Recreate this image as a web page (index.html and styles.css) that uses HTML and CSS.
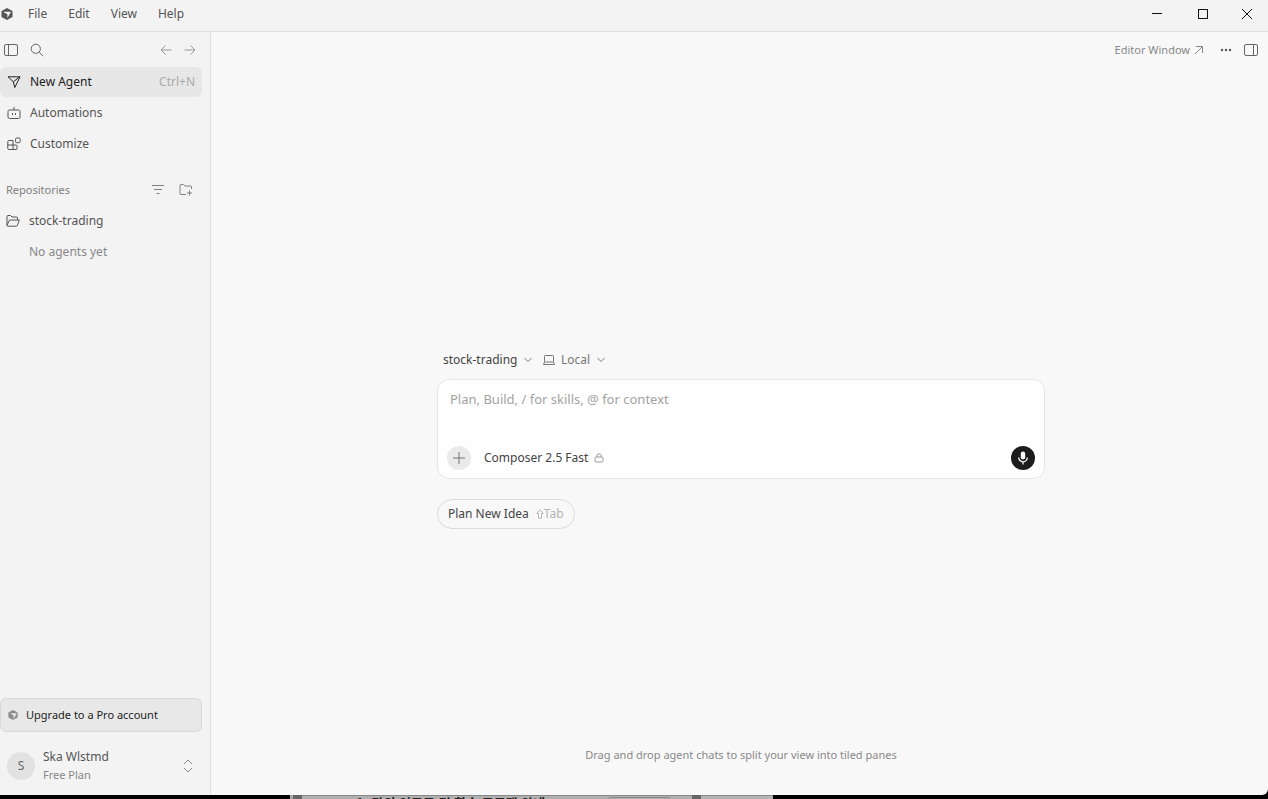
FILE: index.html
```html
<!DOCTYPE html>
<html lang="en">
<head>
<meta charset="utf-8">
<meta name="viewport" content="width=device-width, initial-scale=1">
<title>New Agent</title>
<link rel="stylesheet" href="styles.css">
</head>
<body>
<div class="window">
  <header class="titlebar">
    <svg class="logo" width="12" height="14" viewBox="0 0 12 14" aria-hidden="true"><path fill="#555" d="M6 1l5.500 3v6L6 13 .5 10V4z"/><path fill="#f3f3f3" d="M2 4.800h8L6.400 11V7.200z"/></svg>
    <nav class="menu" aria-label="Application menu">
      <button>File</button><button>Edit</button><button>View</button><button>Help</button>
    </nav>
    <div class="controls">
      <button aria-label="Minimize"><svg width="12" height="12" viewBox="0 0 12 12"><path d="M1 5.500h10"/></svg></button>
      <button aria-label="Maximize"><svg width="12" height="12" viewBox="0 0 12 12"><rect x="1.500" y="1.500" width="9" height="9" rx="1"/></svg></button>
      <button aria-label="Close"><svg width="12" height="12" viewBox="0 0 12 12"><path d="M1 1l10 10M11 1L1 11"/></svg></button>
    </div>
  </header>

  <div class="body">
    <aside class="sidebar">
      <div class="tools">
        <button aria-label="Toggle sidebar"><svg width="14" height="12" viewBox="0 0 14 12"><rect x=".5" y=".5" width="13" height="11" rx="1.500"/><path d="M4.500 1v10"/></svg></button>
        <button aria-label="Search"><svg width="14" height="14" viewBox="0 0 14 14"><circle cx="5.800" cy="5.800" r="4.600"/><path d="M9.200 9.200l4 4"/></svg></button>
        <button class="push faint" aria-label="Back"><svg width="12" height="12" viewBox="0 0 12 12"><path d="M11.500 6H1M5.500 1.500L1 6l4.500 4.500"/></svg></button>
        <button class="faint" aria-label="Forward"><svg width="12" height="12" viewBox="0 0 12 12"><path d="M.5 6H11M6.500 1.500L11 6l-4.500 4.500"/></svg></button>
      </div>

      <nav class="nav" aria-label="Agents">
        <button class="item active"><svg width="14" height="14" viewBox="0 0 14 14"><path d="M1 1.800h12L7.800 12.500 6.300 6.800zM6.300 6.800L12.500 2"/></svg>New Agent<kbd>Ctrl+N</kbd></button>
        <button class="item"><svg width="14" height="14" viewBox="0 0 14 14"><rect x="1" y="4" width="12" height="8.500" rx="1.500"/><path d="M7 4V1M5.500 7v2M8.500 7v2"/></svg>Automations</button>
        <button class="item"><svg width="14" height="14" viewBox="0 0 14 14"><path d="M1.800 3.500h4.200v9H1.800a1 1 0 0 1-1-1v-7a1 1 0 0 1 1-1zM.8 8H9a1 1 0 0 1 1 1v2.500a1 1 0 0 1-1 1H6"/><rect x="8.500" y="1" width="4.700" height="4.700" rx="1.300"/></svg>Customize</button>
      </nav>

      <section class="repos">
        <div class="repos-head">
          <h2>Repositories</h2>
          <button aria-label="Filter"><svg width="12" height="12" viewBox="0 0 12 12"><path d="M0 1.500h12M2 5.500h8M4.500 9.500h3"/></svg></button>
          <button aria-label="Add repository"><svg width="14" height="12" viewBox="0 0 14 12"><path d="M7 10.500H2a1 1 0 0 1-1-1v-8a1 1 0 0 1 1-1h2.500L6 2h5.500a1 1 0 0 1 1 1v2M10.500 6.500v5M8 9h5"/></svg></button>
        </div>
        <button class="repo"><svg width="14" height="12" viewBox="0 0 14 12"><path d="M1 10.500v-9a1 1 0 0 1 1-1h2.500L6 2h4.500a1 1 0 0 1 1 1v2M1 10.500L3.500 5H13.300l-2 5.500a1 1 0 0 1-1 .7H1.700a.7.700 0 0 1-.7-.7z"/></svg>stock-trading</button>
        <p class="empty">No agents yet</p>
      </section>

      <div class="account">
        <button class="upgrade"><svg width="10" height="12" viewBox="0 0 12 14"><path fill="#8b8b8b" d="M6 1l5.500 3v6L6 13 .5 10V4z"/><path fill="#e8e8e8" d="M2.500 5h8L6.500 12V7.200z"/></svg>Upgrade to a Pro account</button>
        <button class="profile">
          <span class="avatar">S</span>
          <span class="who"><span class="name">Ska Wlstmd</span><span class="plan">Free Plan</span></span>
          <svg width="10" height="14" viewBox="0 0 10 14"><path d="M1 5l4-4 4 4M1 9l4 4 4-4"/></svg>
        </button>
      </div>
    </aside>

    <main class="main">
      <div class="topbar">
        <a href="#editor">Editor Window<svg width="10" height="10" viewBox="0 0 10 10"><path d="M1 9l7.500-7.500M2 1.500h6.500V8"/></svg></a>
        <button aria-label="More"><svg width="12" height="4" viewBox="0 0 12 4"><g fill="#555" stroke="none"><circle cx="2" cy="2" r="1.200"/><circle cx="6" cy="2" r="1.200"/><circle cx="10" cy="2" r="1.200"/></g></svg></button>
        <button aria-label="Toggle panel"><svg width="14" height="12" viewBox="0 0 14 12"><rect x=".5" y=".5" width="13" height="11" rx="1.500"/><path d="M9.500 1v10"/></svg></button>
      </div>

      <div class="stage">
        <form class="chat">
          <div class="context">
            <label class="pick strong"><select aria-label="Repository"><option>stock-trading</option></select><svg width="8" height="6" viewBox="0 0 8 6"><path d="M.5 1L4 4.500 7.500 1"/></svg></label>
            <label class="pick"><svg width="12" height="12" viewBox="0 0 12 12"><rect x="1.500" y="1.500" width="9" height="6.500" rx=".8"/><path d="M1.500 8L.6 10.500h10.800L10.500 8"/></svg><select aria-label="Environment"><option>Local</option></select><svg width="8" height="6" viewBox="0 0 8 6"><path d="M.5 1L4 4.500 7.500 1"/></svg></label>
          </div>
          <div class="composer">
            <textarea rows="2" aria-label="Prompt" placeholder="Plan, Build, / for skills, @ for context"></textarea>
            <div class="actions">
              <button type="button" class="round" aria-label="Add context"><svg width="12" height="12" viewBox="0 0 12 12"><path d="M6 0v12M0 6h12"/></svg></button>
              <button type="button" class="model">Composer 2.5 Fast<svg width="10" height="10" viewBox="0 0 10 10"><rect x="1" y="4" width="8" height="5" rx="1.200"/><path d="M2.800 4V3a2.200 2.200 0 0 1 4.400 0v1"/></svg></button>
              <button type="button" class="round mic" aria-label="Dictate"><svg width="12" height="14" viewBox="0 0 12 14"><rect x="3.800" y=".5" width="4.400" height="8" rx="2.200" fill="#fff" stroke="none"/><path stroke="#fff" stroke-width="1.300" d="M1.700 6.500a4.300 4.300 0 0 0 8.600 0M6 10.800V13.500"/></svg></button>
            </div>
          </div>
          <button type="button" class="idea">Plan New Idea<kbd><svg width="8" height="10" viewBox="0 0 8 10"><path d="M4 .8L7.300 4.500H5.500v4.700h-3V4.500H.7z"/></svg>Tab</kbd></button>
        </form>
      </div>

      <p class="hint">Drag and drop agent chats to split your view into tiled panes</p>
    </main>
  </div>
</div>
<div class="behind" lang="ko">
  <div class="edge outer"></div>
  <div class="page"><span>1. 강의 인트로 및 학습 로드맵 안내</span><i></i></div>
  <div class="edge"></div>
  <div class="page light"></div>
</div>
</body>
</html>
```

FILE: styles.css
```css
* { box-sizing: border-box; }

body {
  margin: 0;
  height: 100vh;
  display: flex;
  flex-direction: column;
  overflow: hidden;
  background: #000;
  color: #555;
  font: 12px/18px "Noto Sans", "Open Sans", sans-serif;
}

button, select, textarea {
  font: inherit;
  color: inherit;
  background: none;
  border: 0;
  padding: 0;
  margin: 0;
}

button { display: inline-flex; align-items: center; text-align: left; }
h2, p { margin: 0; font-weight: 400; }
kbd { font-family: inherit; font-size: 12px; color: #aaa; }

svg {
  display: block;
  flex: none;
  fill: none;
  stroke: currentColor;
  stroke-width: 1;
}

.logo path, .upgrade path { stroke: none; }

.window {
  flex: 1;
  min-height: 0;
  display: flex;
  flex-direction: column;
  background: #f8f8f8;
  border-radius: 0 0 6px 0;
  overflow: hidden;
}

.titlebar {
  display: flex;
  align-items: center;
  height: 32px;
  padding: 0 0 3px 1px;
  background: #f3f3f3;
  border-bottom: 1px solid #dfdfdf;
}

.menu { display: flex; gap: 21px; padding-left: 15px; }
.controls { display: flex; margin-left: auto; color: #111; }
.controls button { width: 46px; height: 28px; justify-content: center; }
.controls button:last-child { width: 42px; }
.controls svg { shape-rendering: crispEdges; }

.body { flex: 1; min-height: 0; display: flex; }

.sidebar {
  flex: none;
  width: 211px;
  display: flex;
  flex-direction: column;
  padding-right: 8px;
  background: #f3f3f3;
  border-right: 1px solid #dfdfdf;
}

.tools { display: flex; align-items: center; gap: 12px; height: 35px; padding: 0 6px 0 4px; color: #666; }
.push { margin-left: auto; }
.faint { color: #999; }

.nav { display: flex; flex-direction: column; gap: 1px; }
.item { height: 30px; gap: 9px; padding: 0 7px; border-radius: 6px; }
.item.active { background: #e7e7e7; color: #222; }
.item kbd { margin-left: auto; }

.repos { padding: 21px 9px 0 6px; }
.repos-head { display: flex; align-items: center; gap: 15px; height: 20px; color: #808080; }
.repos-head h2 { flex: 1; font-size: 11px; }
.repo { gap: 9px; height: 30px; margin-top: 6px; }
.empty { padding: 7px 0 0 23px; color: #888; }

.account { display: flex; flex-direction: column; gap: 16px; margin-top: auto; padding-bottom: 11px; }
.upgrade {
  height: 34px;
  gap: 8px;
  padding: 0 7px;
  font-size: 11px;
  color: #222;
  background: #e8e8e8;
  border: 1px solid #d8d8d8;
  border-radius: 6px;
}
.profile { gap: 8px; padding: 0 9px 0 7px; color: #888; }
.avatar {
  width: 28px;
  height: 28px;
  display: grid;
  place-items: center;
  border-radius: 50%;
  background: #e2e2e2;
  color: #666;
}
.who { flex: 1; display: flex; flex-direction: column; }
.name { color: #555; }
.plan { font-size: 11px; }

.main { flex: 1; min-width: 0; display: flex; flex-direction: column; }
.topbar { display: flex; justify-content: flex-end; align-items: center; gap: 12px; height: 36px; padding-right: 10px; color: #666; }
.topbar a { display: flex; align-items: center; gap: 4px; padding-right: 4px; font-size: 11px; color: #888; text-decoration: none; }

.stage { flex: 1; display: flex; align-items: center; justify-content: center; padding: 66px 0 0 3px; }
.chat { width: 608px; max-width: 100%; display: flex; flex-direction: column; align-items: flex-start; }
.context { display: flex; gap: 11px; padding: 0 6px 10px; color: #777; }
.pick { display: flex; align-items: center; gap: 6px; }
.pick select { appearance: none; }
.strong select { color: #444; }

.composer {
  align-self: stretch;
  padding: 10px 9px 8px;
  background: #fefefe;
  border: 1px solid #e6e6e6;
  border-radius: 12px;
}
.composer textarea { display: block; width: 100%; height: 56px; padding: 0 3px; font-size: 13px; resize: none; outline: 0; }
.composer textarea::placeholder { color: #a3a3a3; opacity: 1; }
.actions { display: flex; align-items: center; }
.round { width: 24px; height: 24px; justify-content: center; border-radius: 50%; background: #eaeaea; color: #777; }
.model { gap: 6px; margin-left: 13px; color: #444; }
.model svg { color: #999; }
.mic { margin-left: auto; background: #1c1c1c; }

.idea {
  height: 30px;
  gap: 7px;
  margin-top: 20px;
  padding: 0 10px;
  color: #444;
  border: 1px solid #dadada;
  border-radius: 15px;
}
.idea kbd { display: flex; align-items: center; color: #b5b5b5; }

.hint { padding: 0 0 31px 3px; text-align: center; font-size: 11px; color: #888; }

.behind { flex: none; display: flex; height: 4px; padding-left: 290px; overflow: hidden; }
.edge { width: 9px; background: #666; }
.edge.outer { width: 12px; border-left: 3px solid #aaa; }
.page {
  display: flex;
  width: 390px;
  padding-left: 54px;
  gap: 62px;
  background: #b0b0b0;
  border-top: 1px solid #888;
  font: 700 13px/14px "Noto Sans CJK KR", sans-serif;
  color: #222;
}
.page.light { width: 72px; background: #b4b4b4; }
.page span { white-space: nowrap; }
.page i { width: 64px; height: 14px; margin-top: 1px; border: 1px solid #888; border-radius: 4px; }
```
